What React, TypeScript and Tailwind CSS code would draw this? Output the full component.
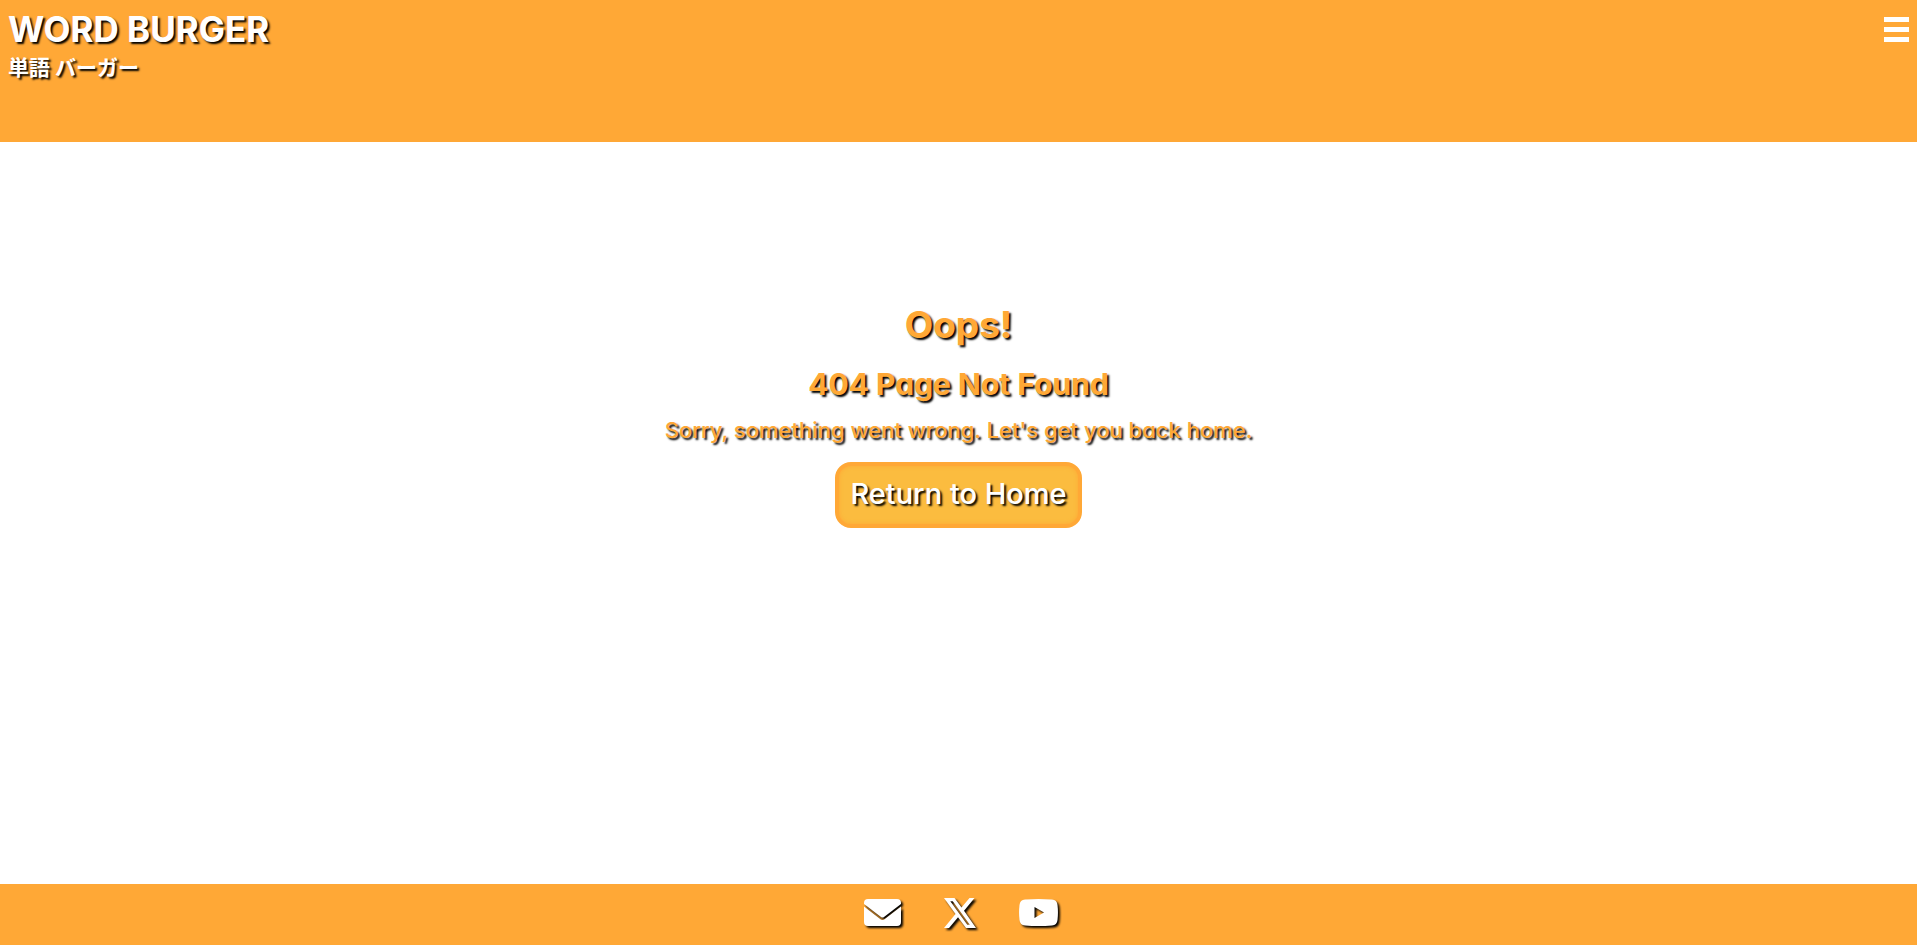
import React from "react";

const icon = "block overflow-visible fill-white drop-shadow-[2px_2px_1px_#000]";

export default function App() {
  return (
    <div className="flex min-h-screen flex-col bg-white font-['Inter','Noto_Sans_CJK_JP',sans-serif] [font-feature-settings:'cv11']">
      <header className="flex h-[142px] items-start justify-between bg-[#ffa836] px-2 text-white">
        <div className="pt-2 [text-shadow:2px_2px_2px_#000]">
          <h1 className="text-[35px] leading-[42px] font-bold">WORD BURGER</h1>
          <p className="mt-1 text-[21px] leading-7 font-bold">単語 バーガー</p>
        </div>
        <button type="button" aria-label="Menu" className="flex w-[25px] flex-col gap-[5px] pt-[17px]">
          <span className="h-[5px] w-full bg-white" />
          <span className="h-[5px] w-full bg-white" />
          <span className="h-[5px] w-full bg-white" />
        </button>
      </header>
      <main className="flex flex-1 flex-col items-center pt-[158px] text-[#ffa836] [text-shadow:2px_2px_2px_#000]">
        <h2 className="text-[37px] leading-[50px] font-bold">Oops!</h2>
        <h3 className="mt-[14px] text-[30px] leading-10 font-bold">404 Page Not Found</h3>
        <p className="mt-3 text-[22px] leading-7 font-medium">Sorry, something went wrong. Let's get you back home.</p>
        <a
          href="#home"
          className="mt-[18px] rounded-2xl border-4 border-[#ffa836] bg-[#fbbc3f] px-[11px] pt-2 pb-[10px] text-[29px] leading-10 font-medium text-white shadow-[inset_0_0_4px_#ffa836]"
        >
          Return to Home
        </a>
      </main>
      <footer className="flex h-[61px] items-start justify-center gap-[43px] bg-[#ffa836] pt-[15px] pl-1">
        <a href="#email" aria-label="Email">
          <svg className={icon} width="37" height="27" viewBox="0 0 37 27">
            <path d="M4 0H33Q37 0 37 4V5L20 18Q18.500 19 17 18L0 5V4Q0 0 4 0Z" />
            <path d="M0 7.500L16.500 20.200Q18.500 21.700 20.500 20.200L37 7.500V23Q37 27 33 27H4Q0 27 0 23Z" />
          </svg>
        </a>
        <a href="#x" aria-label="X" className="-mt-px">
          <svg className={icon} width="32" height="30" viewBox="0 0 32 30">
            <path fillRule="evenodd" d="M0 0H10.500L17.500 9.500L25.500 0H30.500L20 12.700L32 30H22L14 19.200L5 30H0L11.500 16ZM6.300 3.300L23.300 26.700H25.800L8.800 3.300Z" />
          </svg>
        </a>
        <a href="#youtube" aria-label="YouTube">
          <svg className={icon} width="39" height="27" viewBox="0 0 39 27">
            <path fillRule="evenodd" d="M6 0.600Q19.500 -0.600 33 0.600Q38 1 38.500 6Q39.400 13.500 38.500 21Q38 26 33 26.500Q19.500 27.500 6 26.500Q1 26 0.500 21Q-0.400 13.500 0.500 6Q1 1 6 0.600ZM15.500 8V19L25 13.500Z" />
          </svg>
        </a>
      </footer>
    </div>
  );
}
